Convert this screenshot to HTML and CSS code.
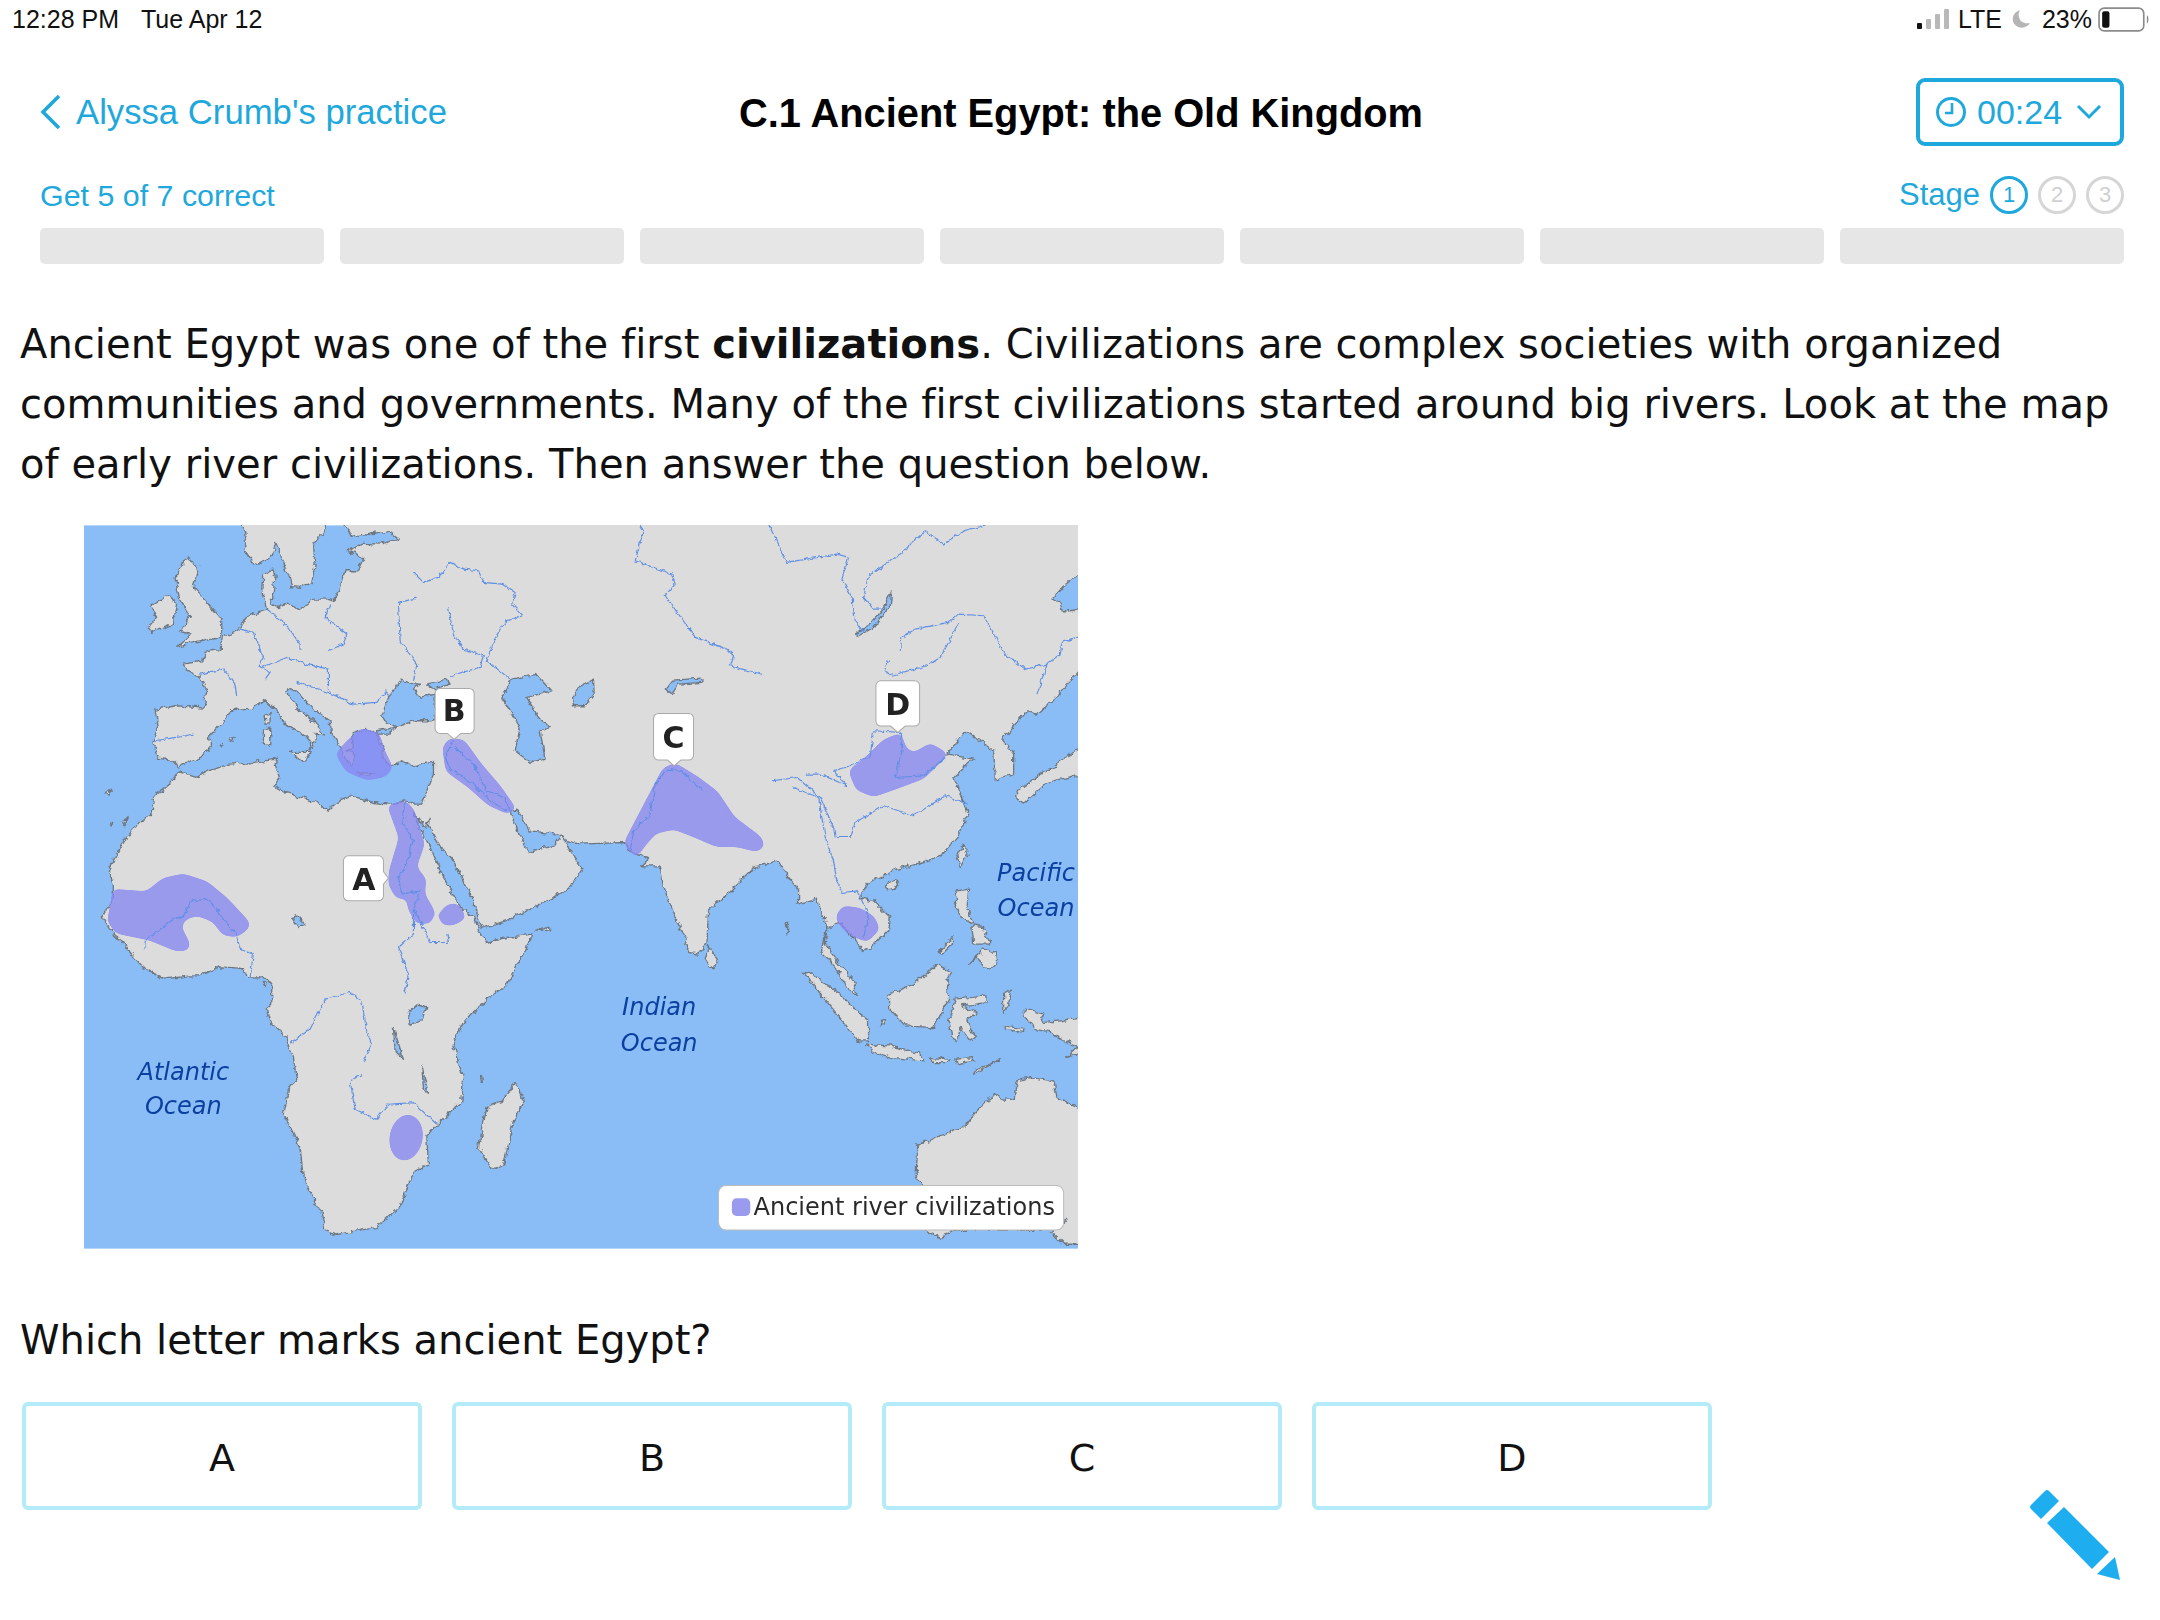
FILE: index.html
```html
<!DOCTYPE html>
<html lang="en">
<head>
<meta charset="utf-8">
<title>C.1 Ancient Egypt: the Old Kingdom</title>
<link rel="stylesheet" href="styles.css">
</head>
<body>
<div class="status">
  <div class="status-left"><span>12:28 PM</span><span>Tue Apr 12</span></div>
  <div class="status-right">
    <svg class="signal" viewBox="0 0 32 20"><rect x="0" y="14" width="5" height="6" rx="1" fill="#111"/><rect x="9" y="10" width="5" height="10" rx="1" fill="#b9b9b9"/><rect x="18" y="5" width="5" height="15" rx="1" fill="#b9b9b9"/><rect x="27" y="0" width="5" height="20" rx="1" fill="#b9b9b9"/></svg>
    <span class="lte">LTE</span>
    <svg class="moon" viewBox="0 0 18 20"><path d="M8 1C2 3 0 8 1 12c1 5 7 8 12 6 2-1 4-2 5-4-6 1-10-1-11-6C6 5 7 3 8 1Z" fill="#b5b5b5"/></svg>
    <span class="pct">23%</span>
    <svg class="battery" viewBox="0 0 50 24"><rect x="1" y="1" width="43" height="22" rx="5" fill="none" stroke="#8b8b8b" stroke-width="1.6"/><rect x="4" y="4" width="7" height="16" rx="2" fill="#111"/><path d="M47 8c2 1 2 7 0 8Z" fill="#8b8b8b"/></svg>
  </div>
</div>

<header class="nav">
  <a class="back">
    <svg class="chev" viewBox="0 0 22 36"><path d="M19 2 3 18l16 16" fill="none" stroke="#1fa8dc" stroke-width="3.6"/></svg>
    <span>Alyssa Crumb's practice</span>
  </a>
  <h1 class="title">C.1 Ancient Egypt: the Old Kingdom</h1>
  <div class="timer">
    <svg class="clock" viewBox="0 0 32 32"><circle cx="16" cy="16" r="13.5" fill="none" stroke="#1fa8dc" stroke-width="3"/><path d="M17 7v10h-7" fill="none" stroke="#1fa8dc" stroke-width="2.6"/></svg>
    <span>00:24</span>
    <svg class="down" viewBox="0 0 26 16"><path d="M2 2l11 11L24 2" fill="none" stroke="#1fa8dc" stroke-width="3"/></svg>
  </div>
</header>

<div class="goal">
  <span>Get 5 of 7 correct</span>
  <div class="stages">
    <span class="stage-label">Stage</span>
    <span class="dot on">1</span><span class="dot">2</span><span class="dot">3</span>
  </div>
</div>

<div class="bars"><i></i><i></i><i></i><i></i><i></i><i></i><i></i></div>

<p class="intro">Ancient Egypt was one of the first <b>civilizations</b>. Civilizations are complex societies with organized communities and governments. Many of the first civilizations started around big rivers. Look at the map of early river civilizations. Then answer the question below.</p>

<svg class="map" viewBox="12 14 2981 2169" role="img" aria-label="Map of early river civilizations">
  <defs>
    <filter id="rough" filterUnits="userSpaceOnUse" x="-20" y="-20" width="3060" height="2240">
      <feTurbulence type="fractalNoise" baseFrequency="0.05" numOctaves="3" seed="4"/>
      <feDisplacementMap in="SourceGraphic" scale="20" xChannelSelector="R" yChannelSelector="G"/>
    </filter>
    <filter id="rough2" filterUnits="userSpaceOnUse" x="-20" y="-20" width="3060" height="2240">
      <feTurbulence type="fractalNoise" baseFrequency="0.07" numOctaves="2" seed="9"/>
      <feDisplacementMap in="SourceGraphic" scale="14" xChannelSelector="R" yChannelSelector="G"/>
    </filter>
    <filter id="smooth" filterUnits="userSpaceOnUse" x="-20" y="-20" width="3060" height="2240" color-interpolation-filters="sRGB">
      <feGaussianBlur stdDeviation="11"/>
      <feColorMatrix type="matrix" values="1 0 0 0 0  0 1 0 0 0  0 0 1 0 0  0 0 0 14 -6.5"/>
    </filter>
  </defs>
  <rect x="12" y="14" width="2981" height="2169" fill="#8abdf6"/>
  <g class="land" filter="url(#rough)">
    <path d="M480 -10 498 40 490 60 500 100 515 125 535 128 560 115 578 100 587 62 600 95 610 130 628 170 635 198 660 200 695 185 705 130 700 72 730 32 745 -10 785 -10 815 50 870 40 925 30 955 55 900 70 850 68 802 92 830 100 850 120 835 150 795 150 780 205 760 240 740 235 700 235 660 268 620 245 595 262 572 245 580 210 585 170 578 142 548 165 545 210 560 268 520 280 495 295 475 330 430 350 420 385 375 395 368 420 310 430 315 445 360 470 380 510 372 562 290 555 225 565 235 620 222 665 235 712 275 718 295 738 360 712 392 675 385 650 420 610 455 570 515 565 555 537 590 570 620 615 660 630 695 665 690 690 705 665 705 640 733 645 700 600 655 565 620 515 630 503 660 520 700 565 750 600 755 640 775 670 790 690 795 715 815 732 825 700 800 690 820 680 815 640 860 625 890 640 895 660 910 690 905 710 930 735 965 720 1000 735 1035 725 1060 722 1060 760 1040 810 1025 850 1000 850 975 840 930 850 880 845 815 825 770 845 745 868 715 850 680 835 620 815 580 795 598 770 585 730 590 715 520 725 430 735 390 750 345 767 295 750 270 790 225 825 215 880 160 920 120 985 85 1050 100 1094 100 1130 70 1185 90 1230 115 1250 150 1295 190 1340 250 1375 330 1365 360 1365 420 1338 480 1342 510 1372 560 1370 575 1390 575 1450 558 1465 570 1500 620 1550 640 1610 650 1680 625 1705 612 1780 660 1880 670 1970 725 2080 735 2130 765 2142 830 2130 890 2120 960 2055 1000 1955 1045 1930 1040 1845 1070 1810 1145 1740 1150 1670 1118 1575 1145 1510 1190 1460 1280 1390 1350 1260 1355 1240 1280 1250 1220 1265 1195 1228 1180 1190 1140 1160 1120 1125 1085 1060 1060 1000 1020 925 1000 875 1035 925 1047 890 1045 915 1085 985 1120 1020 1150 1080 1180 1135 1190 1190 1205 1222 1290 1195 1400 1140 1470 1100 1505 1040 1470 990 1445 945 1420 975 1345 995 1320 950 1290 875 1310 865 1350 930 1430 940 1465 962 1500 970 1635 965 1650 990 1705 1015 1685 1035 1740 1035 1750 1100 1800 1220 1830 1295 1850 1300 1880 1270 1885 1170 1920 1140 2020 1040 2090 1020 2120 1060 2155 1110 2155 1150 2210 1135 2240 1210 2225 1300 2260 1330 2300 1400 2330 1425 2320 1380 2270 1320 2235 1270 2240 1220 2275 1205 2320 1250 2350 1295 2380 1270 2425 1230 2430 1190 2380 1140 2340 1130 2365 1085 2450 1045 2510 1030 2590 1000 2630 950 2665 880 2620 770 2680 715 2600 700 2655 630 2700 660 2740 690 2745 775 2800 760 2800 700 2765 655 2840 570 2870 580 2930 530 3010 430 3010 -10Z"/>
    <path d="M320 110 355 140 340 200 385 250 425 300 425 345 340 365 290 380 330 340 300 330 330 285 300 240 285 170Z"/>
    <path d="M210 255 260 225 290 245 280 310 215 335 205 325 230 290Z"/>
    <path d="M555 585 570 575 570 610 558 610Z"/>
    <path d="M550 625 572 620 572 670 550 670Z"/>
    <path d="M630 695 690 695 675 725Z"/>
    <path d="M830 755 885 758 860 768Z"/>
    <path d="M445 655 462 650 455 665Z"/>
    <path d="M420 670 428 668 426 676Z"/>
    <path d="M1305 1685 1330 1740 1300 1800 1270 1935 1235 1945 1195 1880 1220 1760 1270 1740Z"/>
    <path d="M1885 1275 1915 1320 1895 1345 1875 1315Z"/>
    <path d="M2415 1090 2455 1075 2445 1105 2420 1110Z"/>
    <path d="M2650 970 2660 1000 2640 1040 2630 1010Z"/>
    <path d="M2810 810 2880 760 2930 740 2940 715 3010 680 3010 760 2900 785 2830 850 2815 840Z"/>
    <path d="M2630 1110 2665 1105 2660 1160 2680 1210 2640 1190 2625 1140Z"/>
    <path d="M2675 1215 2710 1220 2730 1270 2680 1270Z"/>
    <path d="M2665 1330 2710 1285 2745 1295 2750 1325 2725 1350 2690 1310Z"/>
    <path d="M2575 1295 2620 1245 2615 1270 2585 1300Z"/>
    <path d="M2575 1330 2615 1355 2600 1380 2605 1435 2560 1520 2475 1515 2425 1460 2425 1420 2500 1390Z"/>
    <path d="M2625 1435 2720 1425 2720 1445 2645 1455 2690 1475 2660 1500 2685 1550 2670 1560 2640 1520 2630 1560 2615 1550 2605 1500Z"/>
    <path d="M2170 1355 2190 1355 2280 1420 2330 1470 2365 1500 2365 1560 2335 1560 2270 1480Z"/>
    <path d="M2360 1570 2430 1575 2520 1600 2530 1620 2440 1610 2380 1595Z"/>
    <path d="M2550 1610 2610 1615 2600 1625 2560 1625Z"/>
    <path d="M2620 1615 2680 1610 2680 1620 2640 1628Z"/>
    <path d="M2680 1660 2760 1615 2690 1645Z"/>
    <path d="M2775 1515 2830 1525 2830 1535 2775 1525Z"/>
    <path d="M2835 1465 2890 1480 2885 1505 2940 1500 3010 1485 3010 1590 2960 1610 2990 1580 2910 1535 2870 1530 2830 1480Z"/>
    <path d="M2770 1415 2790 1405 2785 1450 2770 1480Z"/>
    <path d="M3010 1770 2930 1730 2920 1680 2850 1670 2810 1680 2805 1735 2770 1735 2740 1720 2680 1780 2650 1820 2510 1870 2505 1950 2520 1990 2540 2130 2580 2150 2620 2125 2900 2125 2960 2095 2910 2130 2950 2170 3010 2170Z"/>
    <path d="M2118 1205 2125 1205 2120 1240Z"/>
    <path d="M2405 1500 2412 1498 2412 1512 2400 1512Z"/>
    <path d="M1370 1228 1410 1218 1408 1230Z"/>
    <path d="M75 815 92 805 88 820Z"/>
    <path d="M130 905 145 890 135 915Z"/>
    <path d="M85 908 95 905 92 915Z"/>
    <path d="M1200 1665 1208 1670 1204 1680Z"/>
    <path d="M550 1385 562 1385 558 1398Z"/>
  </g>
  <g class="lakes" filter="url(#rough2)">
    <path d="M905 585 925 530 965 478 1000 490 1020 490 1000 505 1020 530 1040 525 1065 520 1065 600 1000 600 950 620 915 600Z"/>
    <path d="M1040 490 1100 475 1110 490 1060 505Z"/>
    <path d="M890 630 945 620 930 640 890 640Z"/>
    <path d="M1295 475 1370 460 1415 510 1340 530 1375 590 1410 620 1380 630 1395 715 1350 725 1305 690 1320 620 1265 530Z"/>
    <path d="M1477 530 1500 495 1540 475 1542 520 1515 555 1480 555Z"/>
    <path d="M1758 505 1780 478 1865 472 1865 485 1795 490 1775 520Z"/>
    <path d="M2325 340 2370 310 2405 270 2435 210 2430 255 2380 320 2335 345Z"/>
    <path d="M3010 150 2950 195 2915 235 2940 245 2945 270 2970 270 3010 260Z"/>
    <path d="M985 1475 1010 1452 1040 1460 1025 1500 990 1510Z"/>
    <path d="M940 1520 970 1615 945 1590Z"/>
    <path d="M1025 1635 1045 1720 1030 1700Z"/>
    <path d="M635 1190 650 1185 675 1210 655 1220Z"/>
  </g>
  <g class="civ" filter="url(#smooth)">
    <path d="M770 700 800 665 845 625 895 640 910 690 935 740 915 765 860 775 800 750Z"/>
    <path d="M1090 680 1110 655 1150 660 1200 730 1260 800 1305 865 1280 875 1225 850 1170 800 1100 750Z"/>
    <path d="M925 855 975 842 1000 870 1030 970 1005 1040 1035 1075 1030 1120 1060 1170 1050 1205 1010 1205 985 1160 985 1130 950 1130 928 1090 930 1050 960 950Z"/>
    <path d="M1077 1185 1100 1155 1130 1150 1155 1190 1120 1210 1090 1210Z"/>
    <path d="M100 1108 200 1115 250 1075 310 1062 380 1085 440 1135 505 1205 505 1220 470 1245 430 1240 400 1200 350 1180 310 1195 300 1220 325 1265 325 1285 290 1288 210 1255 110 1235 85 1200 95 1150Z"/>
    <ellipse cx="978" cy="1850" rx="46" ry="66" transform="rotate(10 978 1850)"/>
    <path d="M1635 965 1700 840 1750 745 1785 730 1850 770 1910 815 1960 890 2040 950 2050 975 2030 990 1970 975 1910 975 1840 945 1780 922 1725 935 1690 975 1670 1005 1650 990Z"/>
    <path d="M2308 750 2360 710 2410 660 2460 640 2475 685 2500 700 2550 670 2600 700 2530 770 2450 800 2380 825 2330 805Z"/>
    <path d="M2270 1185 2290 1158 2340 1165 2380 1190 2395 1225 2360 1260 2310 1240 2275 1205Z"/>
  </g>
  <g class="rivers" filter="url(#rough2)">
    <path d="M1000 155 1030 185 1075 170 1110 125 1150 145 1195 150 1210 185 1265 190 1305 215 1295 250 1325 285 1280 300 1245 350 1220 420 1290 475"/>
    <path d="M1105 260 1120 340 1150 385 1210 405 1200 440 1110 465"/>
    <path d="M1010 232 955 245 960 360 1010 430 1000 480"/>
    <path d="M750 250 735 290 800 340 790 370 745 390"/>
    <path d="M560 265 610 305 660 370 660 390"/>
    <path d="M480 325 520 335 550 410 535 435 570 455 555 475"/>
    <path d="M545 440 620 410 680 430 745 445 745 510"/>
    <path d="M650 485 745 515 820 550 890 545 920 510 925 525"/>
    <path d="M360 460 430 445 465 490 470 525"/>
    <path d="M225 660 290 650 340 640"/>
    <path d="M1120 655 1095 710 1110 745 1180 790 1230 840 1280 870"/>
    <path d="M1125 680 1180 730 1220 810 1270 830 1290 870"/>
    <path d="M975 845 965 900 1000 960 975 1040 955 1070 965 1120 1020 1110 1000 1170 1000 1240 955 1280 985 1360 975 1415"/>
    <path d="M1005 1170 1050 1265 1105 1265 1100 1240"/>
    <path d="M195 1285 195 1260 280 1195 310 1185 335 1140 385 1135 470 1245 480 1285 520 1300 510 1370"/>
    <path d="M630 1567 690 1525 735 1435 810 1415 845 1440 860 1530 875 1570 850 1620"/>
    <path d="M845 1660 810 1680 825 1765 890 1795 925 1750 1000 1745 1070 1810"/>
    <path d="M1650 990 1660 930 1710 880 1725 790 1760 745 1800 750 1870 810"/>
    <path d="M1670 0 1690 30 1665 120 1775 160 1785 190 1755 225 1845 350 1940 385 1960 405 1950 435 2050 462"/>
    <path d="M2060 0 2120 125 2270 100 2305 110 2285 175 2315 230 2325 300 2350 335"/>
    <path d="M2765 0 2650 30 2590 70 2535 30 2460 100 2365 165 2350 230 2380 265 2405 265"/>
    <path d="M2460 390 2465 350 2505 325 2605 305 2635 280 2710 285 2770 395 2835 445 2900 430 2940 400 2945 365 3010 340"/>
    <path d="M2900 430 2870 520"/>
    <path d="M2635 310 2580 410 2540 435 2430 465 2412 450 2425 420"/>
    <path d="M2260 750 2310 735 2370 705 2380 630 2460 635 2465 690 2445 770 2530 765 2595 710"/>
    <path d="M2260 750 2300 795"/>
    <path d="M2075 780 2150 770 2220 830 2260 920"/>
    <path d="M2140 800 2215 830 2235 950 2260 1020 2270 1080 2285 1115 2330 1110 2365 1180 2350 1250"/>
    <path d="M2180 760 2220 760 2300 795"/>
    <path d="M2260 920 2265 950 2310 950 2325 905 2410 855 2500 885 2595 825 2665 850"/>
  </g>
  <g class="pins">
    <path d="M1080 503H1167a15 15 0 0 1 15 15V623a15 15 0 0 1-15 15H1142L1122 656 1102 638H1080a15 15 0 0 1-15-15V518a15 15 0 0 1 15-15Z"/>
    <path d="M805 1005H895a15 15 0 0 1 15 15V1052L925 1072 910 1090V1125a15 15 0 0 1-15 15H805a15 15 0 0 1-15-15V1020a15 15 0 0 1 15-15Z"/>
    <path d="M1735 578H1825a15 15 0 0 1 15 15V703a15 15 0 0 1-15 15H1802L1782 735 1762 718H1735a15 15 0 0 1-15-15V593a15 15 0 0 1 15-15Z"/>
    <path d="M2402 480H2503a15 15 0 0 1 15 15V601a15 15 0 0 1-15 15H2475L2453 635 2431 616H2402a15 15 0 0 1-15-15V495a15 15 0 0 1 15-15Z"/>
  </g>
  <g class="pin-text">
    <text x="1122" y="601">B</text>
    <text x="851" y="1108">A</text>
    <text x="1780" y="683">C</text>
    <text x="2452" y="583">D</text>
  </g>
  <g class="ocean">
    <text x="310" y="1677">Atlantic</text>
    <text x="310" y="1780">Ocean</text>
    <text x="1737" y="1483">Indian</text>
    <text x="1737" y="1590">Ocean</text>
    <text x="2867" y="1080">Pacific</text>
    <text x="2867" y="1186">Ocean</text>
  </g>
  <rect class="legend" x="1915" y="1994" width="1035" height="133" rx="22"/>
  <rect class="swatch" x="1955" y="2032" width="55" height="53" rx="14"/>
  <text class="legend-text" x="2020" y="2083">Ancient river civilizations</text>
</svg>

<p class="question">Which letter marks ancient Egypt?</p>

<div class="answers">
  <button class="answer">A</button>
  <button class="answer">B</button>
  <button class="answer">C</button>
  <button class="answer">D</button>
</div>

<svg class="pencil" viewBox="0 0 90 90"><path d="M15 1Q17-1 19 1L29 11 11 29 1 19Q-1 17 1 15Z" fill="#1eaef0"/><path d="M34 17 79 62 62 79 17 33Z" fill="#1eaef0"/><path d="M85 67 90 90 67 84Z" fill="#1eaef0"/></svg>
</body>
</html>
```

FILE: styles.css
```css
* { box-sizing: border-box; }
html, body { margin: 0; padding: 0; }
body {
  position: relative;
  width: 2160px;
  height: 1620px;
  background: #fff;
  color: #000;
  font-family: "Liberation Sans", Arial, sans-serif;
  overflow: hidden;
}
.status {
  display: flex;
  justify-content: space-between;
  align-items: center;
  height: 38px;
  padding: 0 10px 0 12px;
  font-size: 25px;
  color: #111;
}
.status-left { display: flex; gap: 22px; }
.status-right { display: flex; align-items: center; }
.signal { width: 32px; height: 20px; margin-right: 9px; }
.moon { width: 18px; height: 20px; margin: 0 12px 0 10px; }
.battery { width: 52px; height: 25px; margin-left: 6px; }
.nav {
  display: grid;
  grid-template-columns: 1fr auto 1fr;
  align-items: center;
  height: 68px;
  margin-top: 40px;
  padding: 0 36px 0 38px;
}
.back {
  display: flex;
  align-items: center;
  gap: 14px;
  margin-left: 2px;
  color: #1fa8dc;
  font-size: 34.7px;
}
.chev { width: 22px; height: 36px; }
.title { margin: 3px 0 0; font-size: 39.8px; font-weight: 700; line-height: 1; }
.timer {
  justify-self: end;
  display: flex;
  align-items: center;
  width: 208px;
  height: 68px;
  padding-left: 15px;
  border: 4px solid #1fa8dc;
  border-radius: 9px;
  color: #1fa8dc;
  font-size: 34px;
}
.clock { width: 32px; height: 32px; margin-right: 10px; }
.down { width: 26px; height: 16px; margin-left: 14px; }
.goal {
  display: flex;
  justify-content: space-between;
  align-items: center;
  height: 40px;
  margin-top: 29px;
  padding: 0 36px 0 40px;
  color: #1fa8dc;
  font-size: 30.4px;
}
.stages { display: flex; align-items: center; gap: 10px; }
.stage-label { font-size: 31px; }
.dot {
  display: flex;
  align-items: center;
  justify-content: center;
  width: 38px;
  height: 38px;
  border: 3px solid #d6d6d6;
  border-radius: 50%;
  color: #d0d0d0;
  font-size: 22px;
}
.dot.on { border-color: #1fa8dc; color: #1fa8dc; }
.bars {
  display: grid;
  grid-template-columns: repeat(7, 1fr);
  gap: 16px;
  height: 36px;
  margin: 13px 36px 0 40px;
}
.bars i { display: block; background: #e6e6e6; border-radius: 5px; }
.intro {
  width: 2130px;
  margin: 50px 0 0 20px;
  font-family: "DejaVu Sans", Verdana, sans-serif;
  font-size: 40px;
  line-height: 60px;
  letter-spacing: .04px;
  font-variant-ligatures: none;
  color: #111;
}
.map { display: block; width: 994px; height: 724px; margin: 31px 0 0 84px; }
.land path { fill: #dcdcdc; stroke: #6d7781; stroke-width: 4; stroke-linejoin: round; }
.lakes path { fill: #8abdf6; stroke: #6d7781; stroke-width: 4; stroke-linejoin: round; }
.civ { opacity: .78; fill: #8888f2; stroke: #8888f2; stroke-width: 8; stroke-linejoin: round; }
.rivers path { fill: none; stroke: #5f8fe4; stroke-width: 3.5; stroke-linejoin: round; }
.pins path { fill: #fff; stroke: #a9a9a9; stroke-width: 3; }
.pin-text text { font: 700 90px "DejaVu Sans", sans-serif; fill: #222; text-anchor: middle; }
.ocean text { font: italic 72px "DejaVu Sans", sans-serif; fill: #0b3fa0; text-anchor: middle; }
.legend { fill: #fff; stroke: #bbb; stroke-width: 3; }
.swatch { fill: #9a9aee; }
.legend-text { font: 72px "DejaVu Sans", sans-serif; fill: #2a2a2a; }
.question {
  margin: 61px 0 0 20px;
  font-family: "DejaVu Sans", Verdana, sans-serif;
  font-size: 40px;
  line-height: 60px;
  color: #111;
}
.answers {
  display: flex;
  gap: 30px;
  margin: 32px 0 0 22px;
}
.answer {
  width: 400px;
  height: 108px;
  padding: 3px 0 0;
  background: #fff;
  border: 4px solid #b3ecf8;
  border-radius: 6px;
  font-family: "DejaVu Sans", Verdana, sans-serif;
  font-size: 38px;
  color: #111;
}
.pencil {
  position: absolute;
  left: 2030px;
  top: 1490px;
  width: 90px;
  height: 90px;
  overflow: visible;
}
```
